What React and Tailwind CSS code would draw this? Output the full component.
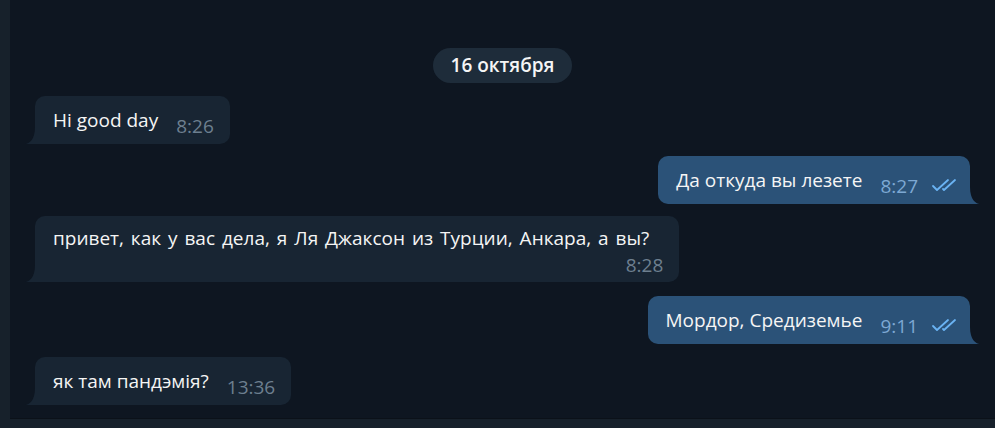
import React from 'react';

const font = { fontFamily: '"Open Sans", "Noto Sans", sans-serif' };

const TailIn = ({ color }) => (
  <svg className="absolute bottom-0 left-[-10px]" width="12" height="17" viewBox="0 0 12 17">
    <path d="M12 0 V17 H0.5 C4 16.5 10 13 10 0 Z" fill={color} />
  </svg>
);

const TailOut = ({ color }) => (
  <svg className="absolute bottom-0 right-[-10px]" width="12" height="17" viewBox="0 0 12 17">
    <path d="M0 0 V17 H11.5 C8 16.5 2 13 2 0 Z" fill={color} />
  </svg>
);

const Checks = () => (
  <svg width="27" height="14" viewBox="0 0 27 14" fill="none" stroke="#6ab3f3" strokeWidth="1.8" strokeLinecap="round" strokeLinejoin="round">
    <path d="M2 8 L6 12 L17 2" />
    <path d="M12 11 L13 12 L24 2" />
  </svg>
);

const Incoming = ({ text, time, className = '' }) => (
  <div className={`relative self-start bg-[#182533] rounded-[10px] rounded-bl-none pl-[18px] pr-4 py-[13px] flex items-start gap-[18px] ${className}`}>
    <TailIn color="#182533" />
    <span className="text-[19px] leading-[22px] text-[#f5f5f5]">{text}</span>
    <span className="text-[19px] leading-[22px] text-[#6d7f8f] mt-[6px] -mb-[6px]">{time}</span>
  </div>
);

const Outgoing = ({ text, time, className = '' }) => (
  <div className={`relative self-end bg-[#2b5278] rounded-[10px] rounded-br-none pl-[18px] pr-3 py-[13px] flex items-start ${className}`}>
    <TailOut color="#2b5278" />
    <span className="text-[19px] leading-[22px] text-[#f5f5f5]">{text}</span>
    <span className="text-[19px] leading-[22px] text-[#7da8d3] mt-[6px] -mb-[6px] ml-[18px]">{time}</span>
    <span className="mt-[9px] ml-[13px] -mb-[9px]"><Checks /></span>
  </div>
);

export default function App() {
  return (
    <div className="w-[995px] h-[428px] flex bg-[#0e1621] overflow-hidden" style={font}>
      <div className="w-[10px] bg-[#17212b] shrink-0" />
      <div className="flex-1 flex flex-col">
        <div className="flex-1 flex flex-col pl-[25px] pr-[25px]">
          <div className="self-center mt-[48px] h-[35px] px-[18px] rounded-full bg-[#1e2c3a] flex items-center text-[19px] font-semibold text-[#f5f5f5]">
            16 октября
          </div>
          <Incoming className="mt-[13px]" text="Hi good day" time="8:26" />
          <Outgoing className="mt-[12px]" text="Да откуда вы лезете" time="8:27" />
          <div className="relative self-start mt-[12px] bg-[#182533] rounded-[10px] rounded-bl-none pl-[18px] pr-4 pt-[11px] pb-[6px] flex flex-col">
            <TailIn color="#182533" />
            <span className="text-[19px] leading-[22px] text-[#f5f5f5] pr-[14px] [word-spacing:2px]">привет, как у вас дела, я Ля Джаксон из Турции, Анкара, а вы?</span>
            <span className="self-end text-[19px] leading-[22px] text-[#6d7f8f] mt-[5px]">8:28</span>
          </div>
          <Outgoing className="mt-[14px]" text="Мордор, Средиземье" time="9:11" />
          <Incoming className="mt-[13px]" text="як там пандэмія?" time="13:36" />
        </div>
        <div className="h-[10px] bg-[#17212b] border-t border-[#0b1119]" />
      </div>
    </div>
  );
}
